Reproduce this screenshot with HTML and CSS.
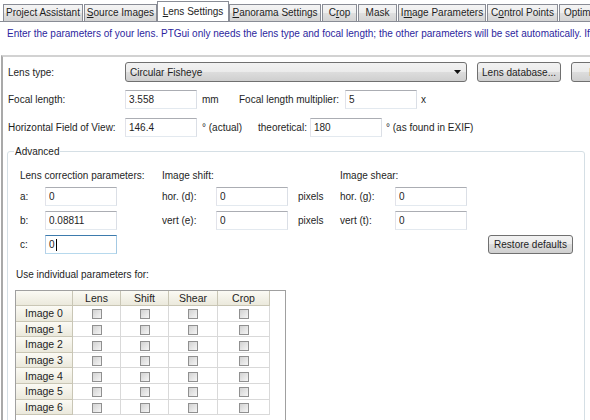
FILE: index.html
```html
<!DOCTYPE html>
<html lang="en">
<head>
    <meta charset="UTF-8">
    <title>PTGui - Lens Settings</title>
    <link rel="stylesheet" href="styles.css">
</head>
<body>
    <div class="tabs">
        <div class="tab">Project Assistant</div>
        <div class="tab"><u>S</u>ource Images</div>
        <div class="tab active"><u>L</u>ens Settings</div>
        <div class="tab"><u>P</u>anorama Settings</div>
        <div class="tab">C<u>r</u>op</div>
        <div class="tab">Mask</div>
        <div class="tab">I<u>m</u>age Parameters</div>
        <div class="tab">C<u>o</u>ntrol Points</div>
        <div class="tab">Optimizer</div>
    </div>

    <p class="intro">Enter the parameters of your lens. PTGui only needs the lens type and focal length; the other parameters will be set automatically. If the lens parameters are not known</p>

    <div class="panel">
        <div class="row">
            <span class="row-label">Lens type:</span>
            <div class="combo">
                <span>Circular Fisheye</span>
                <svg width="7" height="4" viewBox="0 0 7 4"><path d="M0 0H7L3.5 4Z" fill="#111"/></svg>
            </div>
            <button class="btn db-btn">Lens database...</button>
            <button class="btn more-btn">Load from image...</button>
        </div>
        <div class="row">
            <span class="row-label">Focal length:</span>
            <input class="field" type="text" value="3.558">
            <span class="unit unit-mm">mm</span>
            <span class="mult-label">Focal length multiplier:</span>
            <input class="field" type="text" value="5">
            <span class="unit">x</span>
        </div>
        <div class="row">
            <span class="row-label">Horizontal Field of View:</span>
            <input class="field" type="text" value="146.4">
            <span class="unit unit-actual">° (actual)</span>
            <span class="theo-label">theoretical:</span>
            <input class="field" type="text" value="180">
            <span class="unit">° (as found in EXIF)</span>
        </div>

        <fieldset class="advanced">
            <legend>Advanced</legend>
            <div class="adv-grid">
                <span class="span3">Lens correction parameters:</span>
                <span class="span3">Image shift:</span>
                <span class="span3">Image shear:</span>

                <span>a:</span>
                <input class="field" type="text" value="0">
                <span></span>
                <span>hor. (d):</span>
                <input class="field" type="text" value="0">
                <span class="px">pixels</span>
                <span>hor. (g):</span>
                <input class="field" type="text" value="0">
                <span></span>

                <span>b:</span>
                <input class="field" type="text" value="0.08811">
                <span></span>
                <span>vert (e):</span>
                <input class="field" type="text" value="0">
                <span class="px">pixels</span>
                <span>vert (t):</span>
                <input class="field" type="text" value="0">
                <span></span>

                <span>c:</span>
                <div class="field focus">0<span class="caret"></span></div>
                <span class="span6"></span>
                <button class="btn restore-btn">Restore defaults</button>
            </div>

            <div class="adv-note">Use individual parameters for:</div>
            <div class="grid-wrap">
                <table class="img-table">
                    <thead>
                        <tr><th></th><th>Lens</th><th>Shift</th><th>Shear</th><th>Crop</th></tr>
                    </thead>
                    <tbody id="img-rows"></tbody>
                </table>
            </div>
        </fieldset>
    </div>

    <script>
        const rows = document.getElementById('img-rows');
        for (let i = 0; i < 7; i++) {
            const tr = document.createElement('tr');
            tr.innerHTML = `<th>Image ${i}</th>` +
                '<td><span class="check"></span></td>'.repeat(4);
            rows.appendChild(tr);
        }
    </script>
</body>
</html>
```

FILE: styles.css
```css
body {
    margin: 0;
    width: 590px;
    height: 420px;
    overflow: hidden;
    font-family: "Liberation Sans", Arial, sans-serif;
    font-size: 10px;
    color: #1e1e1e;
    background-color: #ffffff;
}

/* tab strip */
.tabs {
    display: flex;
    align-items: flex-end;
    height: 22px;
    padding-left: 3px;
    border-bottom: 1px solid #898c95;
    box-sizing: border-box;
    white-space: nowrap;
    overflow: hidden;
}
.tab {
    flex: none;
    height: 17px;
    margin-right: 1px;
    border: 1px solid #898c95;
    border-bottom: none;
    box-sizing: border-box;
    background: linear-gradient(#f4f4f4, #ededed 50%, #e0e0e0 50%, #d4d4d4);
    text-align: center;
    line-height: 16px;
    overflow: hidden;
}
.tab.active {
    height: 21px;
    margin: 0 0 -1px -1px;
    background: #ffffff;
    line-height: 19px;
    position: relative;
}
.tab:nth-child(1) { width: 80px; }
.tab:nth-child(2) { width: 73px; }
.tab:nth-child(3) { width: 72px; }
.tab:nth-child(4) { width: 92px; }
.tab:nth-child(5) { width: 35px; }
.tab:nth-child(6) { width: 39px; }
.tab:nth-child(7) { width: 88px; }
.tab:nth-child(8) { width: 71px; }
.tab:nth-child(9) { width: 80px; text-align: left; padding-left: 4px; }

.intro {
    margin: 0;
    height: 33px;
    padding: 5px 0 0 7px;
    box-sizing: border-box;
    line-height: 13px;
    color: #2d1f9e;
    white-space: nowrap;
    overflow: hidden;
}

.panel {
    margin-left: 1px;
    padding: 5px 0 0 5px;
    border-top: 2px solid #d2d2d2;
    border-left: 2px solid #a9a9a9;
    height: 400px;
}

/* top form rows */
.row {
    display: flex;
    align-items: center;
    height: 20px;
    margin-bottom: 7.5px;
    white-space: nowrap;
}
.row-label { flex: none; width: 117px; }
.unit { margin-left: 4px; }
.unit-mm { width: 37px; margin-left: 5px; }
.unit-actual { width: 56px; margin-left: 5px; }
.mult-label { width: 106px; }
.theo-label { width: 52px; }

.field {
    flex: none;
    width: 72px;
    height: 19px;
    margin: 0;
    padding: 0 3px;
    box-sizing: border-box;
    border: 1px solid;
    border-color: #abadb3 #dbdfe6 #e3e9ef #e2e3ea;
    font: inherit;
    color: #1e1e1e;
    background: #ffffff;
    outline: none;
}
div.field {
    display: flex;
    align-items: center;
}
.field.focus {
    border-color: #3d7bad #a4c9e3 #b7d9ed #b5cfe7;
}
.caret {
    width: 1px;
    height: 12px;
    margin-left: 1px;
    background: #000000;
}

.combo {
    flex: none;
    display: flex;
    align-items: center;
    justify-content: space-between;
    width: 342px;
    height: 20px;
    padding: 0 5px 0 4px;
    box-sizing: border-box;
    border: 1px solid #707070;
    border-radius: 3px;
    background: linear-gradient(#f2f2f2, #ebebeb 50%, #dddddd 50%, #cfcfcf);
}

.btn {
    flex: none;
    height: 20px;
    padding: 0;
    border: 1px solid #707070;
    border-radius: 3px;
    background: linear-gradient(#f2f2f2, #ebebeb 50%, #dddddd 50%, #cfcfcf);
    font: inherit;
    color: #1e1e1e;
    white-space: nowrap;
    overflow: hidden;
}
.db-btn { width: 84px; margin-left: 10px; }
.more-btn { width: 120px; margin-left: 10px; }

/* advanced group */
.advanced {
    margin: 0.5px 0 0 -1px;
    width: 578px;
    height: 300px;
    padding: 0 0 0 6px;
    box-sizing: border-box;
    border: 1px solid #d5dfe5;
    border-radius: 3px;
}
.advanced legend {
    padding: 0 1px;
    line-height: 13px;
}
.adv-grid {
    display: grid;
    grid-template-columns: 25px 72px 45px 54px 72px 52px 55px 72px 1fr;
    grid-template-rows: 14px 19px 19px 19px;
    row-gap: 5px;
    align-items: center;
    margin-top: 10.5px;
    padding-left: 6px;
    white-space: nowrap;
}
.span3 { grid-column: span 3; }
.span6 { grid-column: span 6; }
.px { padding-left: 10px; }
.restore-btn {
    justify-self: end;
    width: 85px;
    height: 19px;
    margin-right: 11px;
}

.adv-note {
    margin: 14px 0 0 2px;
    line-height: 13px;
}

.grid-wrap {
    margin: 9px 0 0 1px;
    width: 271px;
    height: 200px;
    border: 1px solid #a0a0a0;
    box-sizing: border-box;
}
.img-table {
    border-collapse: separate;
    border-spacing: 0;
    table-layout: fixed;
}
.img-table th,
.img-table td {
    padding: 0;
    font-weight: normal;
    text-align: center;
    border-right: 1px solid #d9d9d9;
    border-bottom: 1px solid #d9d9d9;
    line-height: 12px;
    font-size: 10.5px;
}
.img-table th {
    background: linear-gradient(#fbfaf4, #ebe9dc);
    border-color: #c9c6b5;
}
.img-table thead tr { height: 15px; }
.img-table tbody tr { height: 15.6px; }
.img-table thead th:nth-child(1),
.img-table tbody th { width: 56px; }
.img-table thead th:nth-child(2),
.img-table thead th:nth-child(3) { width: 47px; }
.img-table thead th:nth-child(4) { width: 48px; }
.img-table thead th:nth-child(5) { width: 51px; }

.check {
    display: inline-block;
    width: 10px;
    height: 10px;
    box-sizing: border-box;
    border: 1px solid #909090;
    background: linear-gradient(135deg, #d2d2d2, #f5f5f5);
    vertical-align: middle;
}
```
